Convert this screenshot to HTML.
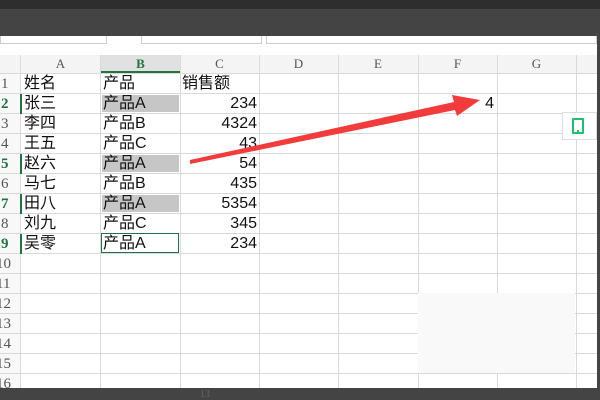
<!DOCTYPE html>
<html><head><meta charset="utf-8"><style>
*{margin:0;padding:0;box-sizing:border-box}
body{width:600px;height:400px;background:#444;position:relative;overflow:hidden;font-family:"Liberation Serif","Noto Serif CJK SC",serif;}
.top{position:absolute;left:0;top:0;width:600px;height:9px;background:#2e2e2e}
.sheet{position:absolute;left:0;top:36px;width:597px;height:352px;background:#fff;overflow:hidden}
.a{position:absolute}
.vl{position:absolute;top:19px;width:1px;height:340px;background:#d9d9d9}
.hl{position:absolute;left:0;width:597px;height:1px;background:#d9d9d9}
.rh{position:absolute;left:0;width:20px;height:20px;font-size:15px;line-height:20px;color:#555;padding-left:1px}
.ch{position:absolute;top:19px;height:18px;font-size:13px;line-height:18px;color:#555;text-align:center}
.c{position:absolute;height:20px;font-size:16px;line-height:20px;color:#111;font-family:"Liberation Sans","Noto Sans CJK SC",sans-serif}
</style></head><body>
<div class="top"></div>
<div class="sheet">
  <div class="a" style="left:0;top:0;width:107px;height:8px;border:1px solid #ccc;border-top:none"></div>
  <div class="a" style="left:141px;top:0;width:121px;height:8px;border:1px solid #ccc;border-top:none"></div>
  <div class="a" style="left:266px;top:0;width:331px;height:8px;border:1px solid #ccc;border-top:none"></div>
  <div class="a" style="left:0;top:19px;width:597px;height:18px;background:#f4f4f4"></div>
  <div class="a" style="left:101px;top:19px;width:79px;height:18px;background:#e1e1e1;border-bottom:2px solid #217346"></div>
  <div class="a" style="left:0;top:37px;width:20px;height:320px;background:#f8f8f8"></div>
  <div class="ch" style="left:20px;width:81px">A</div>
  <div class="ch" style="left:101px;width:79px;color:#217346;font-weight:bold">B</div>
  <div class="ch" style="left:180px;width:79px">C</div>
  <div class="ch" style="left:259px;width:79px">D</div>
  <div class="ch" style="left:338px;width:80px">E</div>
  <div class="ch" style="left:418px;width:79px">F</div>
  <div class="ch" style="left:497px;width:79px">G</div>
  <div class="vl" style="left:20px"></div><div class="vl" style="left:100px"></div>
  <div class="vl" style="left:180px"></div><div class="vl" style="left:259px"></div>
  <div class="vl" style="left:338px"></div><div class="vl" style="left:418px"></div>
  <div class="vl" style="left:497px"></div><div class="vl" style="left:576px"></div>
  <div class="hl" style="top:37px"></div><div class="hl" style="top:57px"></div>
  <div class="hl" style="top:77px"></div><div class="hl" style="top:97px"></div>
  <div class="hl" style="top:117px"></div><div class="hl" style="top:137px"></div>
  <div class="hl" style="top:157px"></div><div class="hl" style="top:177px"></div>
  <div class="hl" style="top:197px"></div><div class="hl" style="top:217px"></div>
  <div class="hl" style="top:237px"></div><div class="hl" style="top:257px"></div>
  <div class="hl" style="top:277px"></div><div class="hl" style="top:297px"></div>
  <div class="hl" style="top:317px"></div><div class="hl" style="top:337px"></div>
  <div class="rh" style="top:38px">1</div>
  <div class="rh" style="top:58px;color:#217346;font-weight:bold">2</div>
  <div class="rh" style="top:78px">3</div><div class="rh" style="top:98px">4</div>
  <div class="rh" style="top:118px;color:#217346;font-weight:bold">5</div>
  <div class="rh" style="top:138px">6</div>
  <div class="rh" style="top:158px;color:#217346;font-weight:bold">7</div>
  <div class="rh" style="top:178px">8</div>
  <div class="rh" style="top:198px;color:#217346;font-weight:bold">9</div>
  <div class="rh" style="top:218px;left:-5px">10</div><div class="rh" style="top:238px;left:-5px">11</div>
  <div class="rh" style="top:258px;left:-5px">12</div><div class="rh" style="top:278px;left:-5px">13</div>
  <div class="rh" style="top:298px;left:-5px">14</div><div class="rh" style="top:318px;left:-5px">15</div>
  <div class="rh" style="top:338px;left:-5px">16</div>
  <div class="a" style="left:20px;top:58px;width:2px;height:20px;background:#217346"></div>
  <div class="a" style="left:20px;top:118px;width:2px;height:20px;background:#217346"></div>
  <div class="a" style="left:20px;top:158px;width:2px;height:20px;background:#217346"></div>
  <div class="a" style="left:20px;top:198px;width:2px;height:20px;background:#217346"></div>
  <div class="a" style="left:102px;top:59px;width:77px;height:17px;background:#c6c6c6"></div>
  <div class="a" style="left:102px;top:119px;width:77px;height:17px;background:#c6c6c6"></div>
  <div class="a" style="left:102px;top:159px;width:77px;height:17px;background:#c6c6c6"></div>
  <div class="a" style="left:101px;top:197px;width:78px;height:20px;border:1px solid #217346"></div>
  <div class="c" style="left:24px;top:38px">姓名</div><div class="c" style="left:103px;top:38px">产品</div><div class="c" style="left:182px;top:38px">销售额</div>
  <div class="c" style="left:24px;top:58px">张三</div><div class="c" style="left:103px;top:58px">产品A</div><div class="c" style="left:180px;top:58px;width:77px;text-align:right">234</div>
  <div class="c" style="left:24px;top:78px">李四</div><div class="c" style="left:103px;top:78px">产品B</div><div class="c" style="left:180px;top:78px;width:77px;text-align:right">4324</div>
  <div class="c" style="left:24px;top:98px">王五</div><div class="c" style="left:103px;top:98px">产品C</div><div class="c" style="left:180px;top:98px;width:77px;text-align:right">43</div>
  <div class="c" style="left:24px;top:118px">赵六</div><div class="c" style="left:103px;top:118px">产品A</div><div class="c" style="left:180px;top:118px;width:77px;text-align:right">54</div>
  <div class="c" style="left:24px;top:138px">马七</div><div class="c" style="left:103px;top:138px">产品B</div><div class="c" style="left:180px;top:138px;width:77px;text-align:right">435</div>
  <div class="c" style="left:24px;top:158px">田八</div><div class="c" style="left:103px;top:158px">产品A</div><div class="c" style="left:180px;top:158px;width:77px;text-align:right">5354</div>
  <div class="c" style="left:24px;top:178px">刘九</div><div class="c" style="left:103px;top:178px">产品C</div><div class="c" style="left:180px;top:178px;width:77px;text-align:right">345</div>
  <div class="c" style="left:24px;top:198px">吴零</div><div class="c" style="left:103px;top:198px">产品A</div><div class="c" style="left:180px;top:198px;width:77px;text-align:right">234</div>
  <div class="c" style="left:418px;top:58px;width:76px;text-align:right">4</div>
  <div class="a" style="left:418px;top:257px;width:157px;height:80px;background:#f9f9f9"></div>
  <div class="a" style="left:562px;top:76px;width:35px;height:28px;background:#fff;border:1px solid #ddd"></div>
  <div class="a" style="left:572px;top:82px;width:12px;height:16px;border:2px solid #1fbf6f;border-radius:1px"></div>
  <div class="a" style="left:577px;top:94px;width:2px;height:2px;background:#1fbf6f"></div>
  <svg class="a" style="left:0;top:0" width="597" height="352"><polygon points="190,124 190,128 455,74 457,80 480,64 452,59 454,66" fill="#f23b3b"/></svg>
</div>
<div class="a" style="left:200px;top:389px;font-size:10px;color:#666">13</div>
</body></html>
